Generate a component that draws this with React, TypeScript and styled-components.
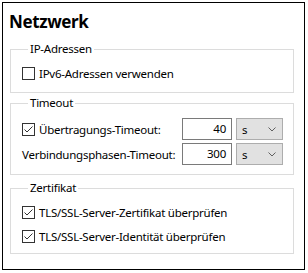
import React from 'react';
import styled, { createGlobalStyle } from 'styled-components';

const GlobalStyle = createGlobalStyle`
  html, body {
    margin: 0;
    padding: 0;
    background: #ffffff;
  }
  body {
    font-family: 'Noto Sans', 'Open Sans', sans-serif;
    font-size: 11.5px;
    letter-spacing: -0.25px;
    color: #000000;
  }
`;

const Frame = styled.div`
  margin: 2px 0 0 2px;
  width: 303px;
  height: 268px;
  box-sizing: border-box;
  border: 1.5px solid #000000;
  padding: 6px 10px 0 7px;
  display: flex;
  flex-direction: column;
`;

const Title = styled.h1`
  margin: 0 0 6px -1px;
  font-size: 17px;
  letter-spacing: -0.4px;
  line-height: 26px;
  font-weight: 700;
`;

const Group = styled.fieldset<{ gapTop: number; padTop: number; padBottom: number; rowGap: number }>`
  margin: ${(p) => p.gapTop}px 0 0 0;
  padding: ${(p) => p.padTop}px 10px ${(p) => p.padBottom}px 11px;
  border: 1px solid #dcdcdc;
  display: flex;
  flex-direction: column;
  gap: ${(p) => p.rowGap}px;
  min-width: 0;
`;

const Legend = styled.legend`
  margin-left: 6px;
  padding: 0 2px;
  line-height: 16px;
`;

const CheckRow = styled.label`
  display: flex;
  align-items: center;
  height: 20px;
  gap: 4px;
  white-space: nowrap;
`;

const Box = styled.span`
  width: 13px;
  height: 13px;
  box-sizing: border-box;
  border: 1px solid #333333;
  background: #ffffff;
  display: flex;
  align-items: center;
  justify-content: center;
  flex: none;
`;

const TimeoutGrid = styled.div`
  display: grid;
  grid-template-columns: minmax(0, 1fr) 50px 47px;
  column-gap: 4px;
  row-gap: 3px;
  align-items: center;
`;

const Label = styled.span`
  white-space: nowrap;
`;

const NumberField = styled.div`
  height: 22px;
  box-sizing: border-box;
  border: 1px solid #7a7a7a;
  background: #ffffff;
  text-align: right;
  padding-right: 5px;
  line-height: 20px;
`;

const Select = styled.div`
  height: 22px;
  box-sizing: border-box;
  border: 1px solid #adadad;
  background: #e1e1e1;
  display: flex;
  align-items: center;
  justify-content: space-between;
  padding: 0 6px 0 5px;
`;

const Check = ({ checked }: { checked: boolean }) => (
  <Box>
    {checked && (
      <svg width="11" height="11" viewBox="0 0 11 11">
        <polyline points="1.5,5.5 4,8 9.5,2.5" fill="none" stroke="#333333" strokeWidth="1" />
      </svg>
    )}
  </Box>
);

const Chevron = () => (
  <svg width="8" height="5" viewBox="0 0 8 5">
    <polyline points="0.5,0.5 4,4 7.5,0.5" fill="none" stroke="#606060" strokeWidth="1" />
  </svg>
);

const CheckOption = ({ checked, text }: { checked: boolean; text: string }) => (
  <CheckRow>
    <Check checked={checked} />
    {text}
  </CheckRow>
);

export default function App() {
  return (
    <>
      <GlobalStyle />
      <Frame>
        <Title>Netzwerk</Title>

        <Group gapTop={0} padTop={6} padBottom={9} rowGap={0}>
          <Legend>IP-Adressen</Legend>
          <CheckOption checked={false} text="IPv6-Adressen verwenden" />
        </Group>

        <Group gapTop={2} padTop={7} padBottom={9} rowGap={0}>
          <Legend>Timeout</Legend>
          <TimeoutGrid>
            <CheckRow>
              <Check checked />
              Übertragungs-Timeout:
            </CheckRow>
            <NumberField>40</NumberField>
            <Select>
              s
              <Chevron />
            </Select>
            <Label>Verbindungsphasen-Timeout:</Label>
            <NumberField>300</NumberField>
            <Select>
              s
              <Chevron />
            </Select>
          </TimeoutGrid>
        </Group>

        <Group gapTop={5} padTop={6} padBottom={7} rowGap={4}>
          <Legend>Zertifikat</Legend>
          <CheckOption checked text="TLS/SSL-Server-Zertifikat überprüfen" />
          <CheckOption checked text="TLS/SSL-Server-Identität überprüfen" />
        </Group>
      </Frame>
    </>
  );
}
